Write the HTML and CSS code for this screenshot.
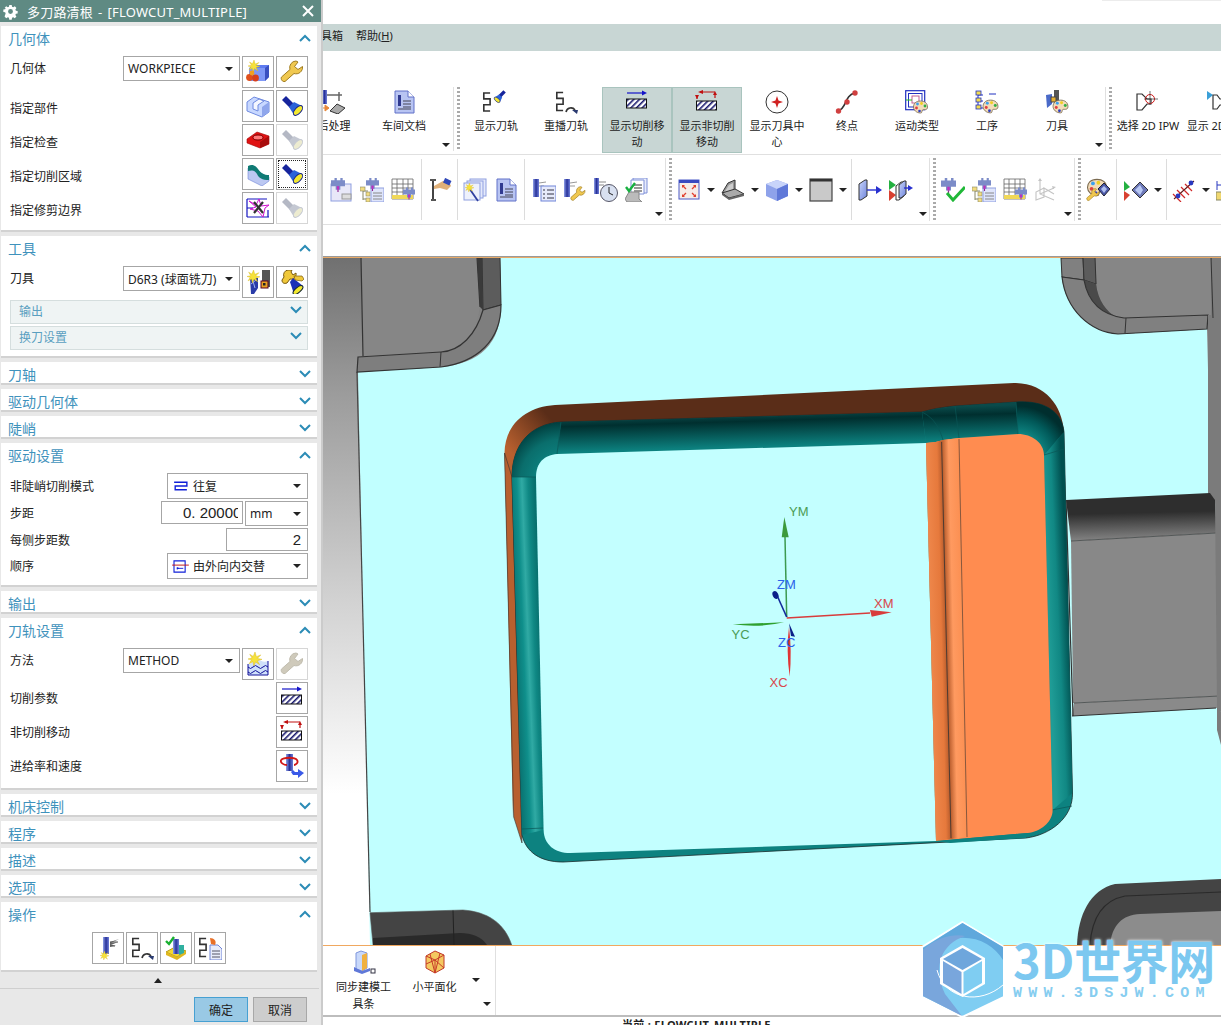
FILE: index.html
```html
<!DOCTYPE html>
<html lang="zh">
<head>
<meta charset="utf-8">
<title>多刀路清根</title>
<link rel="stylesheet" href="styles.css">
</head>
<body>
<svg class="sprite" xmlns="http://www.w3.org/2000/svg">
  <defs>
    <pattern id="hatch" width="4" height="4" patternUnits="userSpaceOnUse" patternTransform="rotate(45)"><rect width="4" height="4" fill="#fff"/><rect width="1.6" height="4" fill="#1a1a70"/></pattern>
    <linearGradient id="gBlue" x1="0" y1="0" x2="1" y2="1"><stop offset="0" stop-color="#c8d4fa"/><stop offset="1" stop-color="#6f85dc"/></linearGradient>
    <linearGradient id="gTool" x1="0" y1="0" x2="1" y2="0"><stop offset="0" stop-color="#8fa0e8"/><stop offset=".5" stop-color="#28329a"/><stop offset="1" stop-color="#6f7fd8"/></linearGradient>
    <linearGradient id="gBg" x1="0" y1="0" x2="0" y2="1"><stop offset="0" stop-color="#707070"/><stop offset=".2" stop-color="#9c9c9c"/><stop offset=".5" stop-color="#d2d2d2"/><stop offset=".78" stop-color="#fff"/></linearGradient>
    <linearGradient id="gBrown" gradientUnits="userSpaceOnUse" x1="505" y1="445" x2="545" y2="412"><stop offset="0" stop-color="#b8602f"/><stop offset="1" stop-color="#5a2d18"/></linearGradient>
    <linearGradient id="gTop" gradientUnits="userSpaceOnUse" x1="740" y1="413" x2="741" y2="447"><stop offset="0" stop-color="#0a4a4a"/><stop offset=".25" stop-color="#002f2f"/><stop offset="1" stop-color="#0c807e"/></linearGradient>
    <linearGradient id="gLeft" gradientUnits="userSpaceOnUse" x1="516" y1="650" x2="541" y2="649"><stop offset="0" stop-color="#0a7674"/><stop offset=".3" stop-color="#0f8f8b"/><stop offset=".5" stop-color="#30aaa4"/><stop offset=".75" stop-color="#0f8884"/><stop offset="1" stop-color="#08706e"/></linearGradient>
    <linearGradient id="gRight" gradientUnits="userSpaceOnUse" x1="1048" y1="625" x2="1069" y2="624"><stop offset="0" stop-color="#1f9c96"/><stop offset=".5" stop-color="#118884"/><stop offset="1" stop-color="#004f4f"/></linearGradient>
    <radialGradient id="gCornerL" gradientUnits="userSpaceOnUse" cx="561" cy="480" r="58"><stop offset=".4" stop-color="#0c807e"/><stop offset=".7" stop-color="#0a6e6c"/><stop offset="1" stop-color="#003e3e"/></radialGradient>
    <radialGradient id="gCornerR" gradientUnits="userSpaceOnUse" cx="1018" cy="458" r="52"><stop offset=".45" stop-color="#0e8683"/><stop offset=".75" stop-color="#015a5a"/><stop offset="1" stop-color="#002e2e"/></radialGradient>
    <linearGradient id="gConn" gradientUnits="userSpaceOnUse" x1="1140" y1="498" x2="1141" y2="540"><stop offset="0" stop-color="#2e2e2e"/><stop offset=".35" stop-color="#2e2e2e"/><stop offset="1" stop-color="#858585"/></linearGradient>
    <linearGradient id="gStrip" gradientUnits="userSpaceOnUse" x1="928" y1="640" x2="970" y2="639"><stop offset="0" stop-color="#f08a4e"/><stop offset=".32" stop-color="#e6793c"/><stop offset=".44" stop-color="#b85c2c"/><stop offset=".6" stop-color="#ff9a60"/><stop offset="1" stop-color="#f98848"/></linearGradient>
  </defs>

  <symbol id="pal" viewBox="0 0 16 14"><path d="M8 1C3 1 1 4 1 7s3 6 7 6c2 0 1-2 2-3s5 1 5-3-3-6-7-6z" fill="#f2dcb8" stroke="#7a6a50" stroke-width=".8"/><circle cx="5" cy="4" r="1.4" fill="#3aa0f0"/><circle cx="9" cy="3.5" r="1.4" fill="#f0d020"/><circle cx="12.5" cy="6" r="1.4" fill="#30b040"/><circle cx="4" cy="8" r="1.4" fill="#e04040"/><circle cx="7" cy="11" r="1.3" fill="#3040c0"/></symbol>
  <symbol id="zig" viewBox="0 0 10 22"><path d="M9 1H2v6.500h7V14H2v7h7" fill="none" stroke="#333" stroke-width="1.800"/></symbol>
  <symbol id="flash" viewBox="0 0 24 24"><path d="M2 6l4-4 8 8-4 4z" fill="#16249c"/><path d="M9 13l5-5 8 4-8 9z" fill="#2a62d8"/><ellipse cx="18" cy="16.500" rx="6" ry="3" transform="rotate(-48 18 16.500)" fill="#f2e830" stroke="#12208a"/></symbol>
  <symbol id="flashoff" viewBox="0 0 24 24"><path d="M2 6l4-4 8 8-4 4z" fill="#b4b8c4"/><path d="M9 13l5-5 8 4-8 9z" fill="#c4c8d2"/><ellipse cx="18" cy="16.500" rx="6" ry="3" transform="rotate(-48 18 16.500)" fill="#ecebd0" stroke="#c4c8d2"/></symbol>
  <symbol id="wrench" viewBox="0 0 24 24"><path d="M16 1a6.500 6.500 0 0 0-6 8.500L1.500 17c-1 2 .5 5 3.500 4.500L14 13.500a6.500 6.500 0 0 0 8.500-7L18 9.500l-3.500-3L18 2z" fill="#f0c850" stroke="#a07c20"/></symbol>
  <symbol id="wrenchoff" viewBox="0 0 24 24"><path d="M16 1a6.500 6.500 0 0 0-6 8.500L1.500 17c-1 2 .5 5 3.500 4.500L14 13.500a6.500 6.500 0 0 0 8.500-7L18 9.500l-3.500-3L18 2z" fill="#cfcabb" stroke="#c0bcae"/></symbol>
  <symbol id="star" viewBox="0 0 12 12"><path d="M6 0l1.200 4L11 2.500 8 5.500l4 .8-4 1.200 2 3.500-3.500-2.500L5 12l-.8-3.700L1 10l2-3.300L0 6l3.500-.8L1.500 2l3 1.800z" fill="#f6e23a" stroke="#d8b820" stroke-width=".4"/></symbol>

  <symbol id="geom" viewBox="0 0 24 24"><path d="M3 8l5-3h15v12l-4 4H3z" fill="#5f7cf0"/><path d="M3 8h16v13H3z" fill="#7f98f6"/><path d="M19 8l4-3v12l-4 4z" fill="#3a50c0"/><use href="#star" x="2" y="0" width="12" height="12"/><circle cx="3.500" cy="17.500" r="3.400" fill="#e0501c"/><circle cx="9.500" cy="18" r="3.400" fill="#d8401c"/><circle cx="6" cy="13" r="2.400" fill="#f0a020"/></symbol>
  <symbol id="part" viewBox="0 0 24 24"><path d="M1 8l7-5 15 5v10l-7 5L1 17z" fill="#c8d8ff" stroke="#6f8ae0"/><path d="M7 9l6-4 5 2-6 4v6l-5-2z" fill="#f4f7ff" stroke="#6f8ae0"/><path d="M16 23V13l7-5v10z" fill="#8fa6ec"/></symbol>
  <symbol id="redblock" viewBox="0 0 24 24"><path d="M1 11l10-7 12 4v8l-9 4-13-5z" fill="#e01212" stroke="#a00808" stroke-width=".6"/><ellipse cx="12" cy="9.500" rx="5" ry="2.500" fill="#ff7a7a" stroke="#700"/><path d="M14 20v-6l9-6v8z" fill="#a80c0c"/></symbol>
  <symbol id="surface" viewBox="0 0 24 24"><path d="M2 13V6l21 9v4l-7 5-14-7z" fill="#bcc8f2" stroke="#6f84d8" stroke-width=".6"/><path d="M2 4c4-2 7-1 10 3s6 6 11 6v5c-7 0-10-2-12-6S6 8 2 9z" fill="#0f7a74"/></symbol>
  <symbol id="trim" viewBox="0 0 24 24"><rect x="1" y="2" width="22" height="20" fill="#fff"/><path d="M1 3h20M1 12h6M1 21h22M1 3v18M22 14v7" fill="none" stroke="#1414c0" stroke-width="1.200"/><path d="M3 5l7 6-6 2 8 2 5 6 2-9 4-3-8 1-2-7-3 6z" fill="none" stroke="#d010d0"/><path d="M8 6l9 11M17 6L8 17" stroke="#333" stroke-width="2.200"/></symbol>
  <symbol id="toolnew" viewBox="0 0 24 24"><rect x="16" y="0" width="8" height="17" fill="#555"/><rect x="15" y="11" width="7" height="7" fill="#e8a020" stroke="#502"/><rect x="17" y="13" width="2.500" height="2.500" fill="#222"/><path d="M4 8h8v10l-4 6H5z" fill="#2a3ca8"/><path d="M6 8l3 10M5 14l5-4" stroke="#9fb0f0"/><use href="#star" x="1" y="0" width="13" height="13"/></symbol>
  <symbol id="toolwrench" viewBox="0 0 24 24"><path d="M8 0a5 5 0 0 0-4 7l-2 3c0 3 2 4 5 3l3-4a5 5 0 0 0 6-6l-3 2-2-3 1-2z" fill="#f0c83a" stroke="#7a5a10"/><path d="M10 12l3-4 10 8-9 8z" fill="#1c30b8"/><ellipse cx="18" cy="20" rx="6" ry="2.600" transform="rotate(-40 18 20)" fill="#f2e830" stroke="#123"/><path d="M14 6h8l2 3-2 2-7-1z" fill="#f0c83a" stroke="#7a5a10" stroke-width=".7"/></symbol>
  <symbol id="methodnew" viewBox="0 0 24 24"><path d="M2 12c5 0 5-4 9-4s6 3 11 1v14H2z" fill="#cfe0fa"/><path d="M2 15q2.500 3 5 0t5 0 5 0 5 0M2 20q2.500 3 5 0t5 0 5 0 5 0M2 23h20" fill="none" stroke="#10109a"/><path d="M2 12v11M22 9v14" stroke="#10109a"/><use href="#star" x="2" y="0" width="14" height="14"/></symbol>
  <symbol id="cutp" viewBox="0 0 24 24"><path d="M2 3h18" stroke="#1414c8" stroke-width="1.200"/><path d="M17 .5l5 2.500-5 2.500z" fill="#1414c8"/><rect x="1.500" y="9" width="20" height="9" fill="url(#hatch)" stroke="#111"/></symbol>
  <symbol id="noncut" viewBox="0 0 24 24"><path d="M5 2h15M20 3v5M2 6v3" stroke="#c01010" stroke-width="1.200" fill="none"/><path d="M8 0L3 2l5 2zM18 5h4l-2-4zM0 5h4l-2 4z" fill="#c01010"/><rect x="1.500" y="11" width="20" height="9" fill="url(#hatch)" stroke="#111"/></symbol>
  <symbol id="feed" viewBox="0 0 24 24"><rect x="6" y="0" width="7" height="17" fill="url(#gTool)"/><path d="M1 6c3-3 14-3 16 0s-2 5-3 5M1 6c-1 3 3 5 6 5" fill="none" stroke="#d01818" stroke-width="1.800"/><path d="M11 18l2 3h5v3l6-5-6-4v3h-3l-2-2z" fill="#3a5ae8"/></symbol>
  <symbol id="gen" viewBox="0 0 24 24"><rect x="7" y="1" width="6" height="17" fill="url(#gTool)"/><path d="M14 6l9-3-8 4 7-1-7 3 5 0-6 2z" fill="#666"/><path d="M14 6h8M14 10h5" stroke="#555"/><use href="#star" x="4" y="15" width="9" height="9"/></symbol>
  <symbol id="replay" viewBox="0 0 24 24"><use href="#zig" x="1" y="1" width="9" height="21"/><path d="M12 22a5 5 0 0 1 9-2" fill="none" stroke="#333" stroke-width="1.600"/><path d="M18 20h6l-1 4z" fill="#2a3a70"/></symbol>
  <symbol id="verify" viewBox="0 0 24 24"><path d="M2 16l9-5 11 4-9 6z" fill="#f4d832" stroke="#b89a18"/><path d="M2 16v3l11 5v-3zM13 21v3l9-6v-3z" fill="#e0b820"/><rect x="9" y="3" width="6" height="15" fill="url(#gTool)"/><path d="M15 9h5v8l-5 2z" fill="#30b0a0"/><path d="M2 5l3 3 5-7" fill="none" stroke="#18b030" stroke-width="2.400"/></symbol>
  <symbol id="listing" viewBox="0 0 24 24"><use href="#zig" x="0" y="1" width="9" height="21"/><path d="M12 9h8l4 4v11H12z" fill="#e8ecfb" stroke="#6f84d8"/><path d="M14 15h8M14 18h8M14 21h8" stroke="#556"/><path d="M12 2c4 0 7 3 5 7l-4-1z" fill="#e87028"/></symbol>
  <symbol id="post" viewBox="0 0 24 24"><rect x="0" y="0" width="5" height="14" fill="url(#gTool)"/><path d="M5 5h12M17 2v9M14 5h6" stroke="#666" stroke-width="1.500" fill="none"/><path d="M8 21l7-7 8 4-7 6z" fill="#aaa" stroke="#333"/><path d="M0 18h5M3 15l4 3-4 3z" fill="#e88838" stroke="#e88838"/></symbol>
  <symbol id="doc" viewBox="0 0 24 24"><path d="M3 1h13l6 6v16H3z" fill="#b8c4f2" stroke="#6070c8"/><path d="M16 1v6h6" fill="#fff" stroke="#6070c8"/><rect x="6" y="5" width="3" height="11" fill="#303a90"/><path d="M11 11h8M11 14h8M11 17h8M6 19h13" stroke="#445"/></symbol>
  <symbol id="pathflash" viewBox="0 0 30 24"><use href="#zig" x="1" y="1" width="9" height="22"/><g transform="translate(26 -1) rotate(90) scale(.6)"><use href="#flash" width="24" height="24"/></g></symbol>
  <symbol id="center" viewBox="0 0 24 24"><circle cx="12" cy="12" r="11" fill="#fff" stroke="#333"/><path d="M12 6l1.500 4.500L18 12l-4.500 1.500L12 18l-1.500-4.500L6 12l4.500-1.500z" fill="#d02020"/></symbol>
  <symbol id="endp" viewBox="0 0 24 24"><path d="M3 21C12 19 9 5 20 3" fill="none" stroke="#333" stroke-width="1.600"/><circle cx="20" cy="3" r="2.700" fill="#d04040"/><circle cx="12" cy="12" r="2.700" fill="#d04040"/><circle cx="3.500" cy="21" r="2.700" fill="#d04040"/></symbol>
  <symbol id="motion" viewBox="0 0 24 24"><rect x=".7" y=".7" width="19" height="19" fill="#fff" stroke="#2030c0" stroke-width="1.200"/><rect x="3.500" y="3.500" width="13.500" height="13.500" fill="none" stroke="#2030c0"/><rect x="7" y="6" width="7" height="7" fill="none" stroke="#c06090"/><path d="M1 10h6" stroke="#20c020"/><use href="#pal" x="7" y="10" width="17" height="14"/></symbol>
  <symbol id="oper" viewBox="0 0 24 24"><path d="M3 1v18M3 5h5M3 11h5M3 18h5M14 4h7" stroke="#2030c0" fill="none"/><rect x="1" y="1" width="5" height="4" fill="#f2dc50" stroke="#2030c0" stroke-width=".8"/><rect x="1" y="8" width="5" height="4" fill="#f2dc50" stroke="#2030c0" stroke-width=".8"/><rect x="1" y="15" width="5" height="4" fill="#f2dc50" stroke="#2030c0" stroke-width=".8"/><use href="#pal" x="7" y="9" width="17" height="15"/></symbol>
  <symbol id="toolpal" viewBox="0 0 24 24"><rect x="9" y="0" width="5" height="13" fill="#555"/><path d="M1 5l6-1v10l-5 4z" fill="#4a6ac8"/><rect x="6" y="7" width="5" height="5" fill="#e8b030" stroke="#444"/><use href="#pal" x="7" y="9" width="17" height="15"/></symbol>
  <symbol id="ipw" viewBox="0 0 24 24"><path d="M1 4h5l5 5h4v5h-4l-5 6H1z" fill="#fff" stroke="#333" stroke-width="1.200"/><circle cx="14" cy="9" r="4.500" fill="none" stroke="#d01818"/><path d="M14 1v14M8 9h14" stroke="#333" stroke-width=".7"/></symbol>
  <symbol id="ipwshow" viewBox="0 0 24 24"><path d="M1 1l6 4-6 5z" fill="#3aa0d8"/><path d="M7 5h4l3 4h4v6h-4l-3 4H7z" fill="#fff" stroke="#333" stroke-width="1.200"/></symbol>

  <symbol id="head" viewBox="0 0 12 12"><path d="M0 2h3V0h2v2h3V0h2v2h2v5H8v3H4V7H0z" fill="#7c8cc8"/><path d="M5 7h2v3H5z" fill="#c030c0"/><path d="M6 10v2" stroke="#902090"/></symbol>
  <symbol id="box" viewBox="0 0 24 24"><rect x="2" y="6" width="20" height="17" fill="#e8e8f8" stroke="#8f9fe0"/><rect x="13" y="16" width="9" height="5" fill="#ddd" stroke="#999"/><use href="#head" x="2" y="0" width="14" height="14"/></symbol>
  <symbol id="treetool" viewBox="0 0 24 24"><path d="M3 9v13M3 13h5M3 21h5" stroke="#886" fill="none"/><rect x="0" y="9" width="5" height="4" fill="#f2dc80" stroke="#886" stroke-width=".6"/><rect x="6" y="14" width="4" height="4" fill="#f2dc80" stroke="#886" stroke-width=".6"/><rect x="6" y="20" width="4" height="4" fill="#f2dc80" stroke="#886" stroke-width=".6"/><rect x="11" y="10" width="13" height="14" fill="#dfe5fb" stroke="#8f9fe0"/><path d="M13 15h9M13 18h9M13 21h9" stroke="#888"/><use href="#head" x="6" y="0" width="13" height="13"/></symbol>
  <symbol id="table" viewBox="0 0 24 24"><path d="M1 1h21v20H1zM1 6h21M1 10h21M1 14h21M6 1v20M12 1v20M17 1v20" fill="#fff" stroke="#666" stroke-width=".8"/><rect x="1" y="17" width="21" height="4" fill="#f0d858"/><use href="#head" x="12" y="9" width="12" height="13"/></symbol>
  <symbol id="flag" viewBox="0 0 24 24"><path d="M5 1v20" stroke="#444" stroke-width="2"/><path d="M3 21h5v2H3zM2 1h6v2H2z" fill="#555"/><path d="M6 8l9-5 6 1 2 4-4 4-7-2-6 1z" fill="#e0b078"/><rect x="16" y="1" width="7" height="5" fill="#3048b8" transform="rotate(25 19 3)"/></symbol>
  <symbol id="wand" viewBox="0 0 24 24"><rect x="7" y="1" width="16" height="17" fill="#e4e9fb" stroke="#8f9fe0"/><rect x="4" y="3" width="16" height="17" fill="#e4e9fb" stroke="#8f9fe0"/><rect x="1" y="5" width="16" height="17" fill="#eef1fc" stroke="#8f9fe0"/><path d="M6 10l9 13" stroke="#3040a0" stroke-width="1.800"/><use href="#star" x="2" y="5" width="9" height="9"/></symbol>
  <symbol id="toollist" viewBox="0 0 24 24"><rect x="1" y="1" width="6" height="18" fill="url(#gTool)"/><path d="M7 5l7-1M7 8h5" stroke="#999"/><rect x="9" y="8" width="15" height="15" fill="#e6eafb" stroke="#6f84d8"/><path d="M11 12h2M15 12h7M11 16h2M15 16h7M11 20h2M15 20h7" stroke="#334"/></symbol>
  <symbol id="toolwr2" viewBox="0 0 24 24"><rect x="1" y="1" width="6" height="18" fill="url(#gTool)"/><path d="M7 5l7-1M7 8h5" stroke="#999"/><use href="#wrench" x="6" y="8" width="18" height="16"/></symbol>
  <symbol id="toolclock" viewBox="0 0 24 24"><rect x="0" y="0" width="5" height="16" fill="url(#gTool)"/><path d="M5 4h7M5 7h5" stroke="#888"/><circle cx="15" cy="15" r="8.500" fill="#d8e0f0" stroke="#556"/><path d="M15 9v6l4 2" fill="none" stroke="#222"/></symbol>
  <symbol id="checkdoc" viewBox="0 0 24 24"><path d="M8 5V0h14v15h-4" fill="#e8ecfb" stroke="#7f90d8"/><path d="M6 2h13v14H6z" fill="#fff" stroke="#7f90d8"/><path d="M9 7h8M9 10h8M9 13h8" stroke="#333"/><path d="M0 21l4-7h10v7l3 3H2z" fill="#bbb" stroke="#888"/><path d="M1 9l3 4 6-8" fill="none" stroke="#18b040" stroke-width="2.400"/></symbol>
  <symbol id="fit" viewBox="0 0 24 24"><rect x="2" y="2" width="20" height="19" fill="#f6ece8" stroke="#4a5ac8"/><rect x="2" y="2" width="20" height="3" fill="#3a4ac0"/><path d="M6 8l3 3M18 8l-3 3M6 18l3-3M18 18l-3-3" stroke="#e04030" stroke-width="1.300"/><path d="M5 7h3L5 10zM19 7h-3l3 3zM5 19h3l-3-3zM19 19h-3l3-3z" fill="#e04030"/></symbol>
  <symbol id="laptop" viewBox="0 0 24 24"><path d="M1 15L7 5l7-3v10l-6 8z" fill="#999" stroke="#333"/><path d="M3 15l5-8 4-2v7l-4 5z" fill="#ccc"/><path d="M1 15l7 5 15-4-7-4-2-1z" fill="#aaa" stroke="#333"/><path d="M1 15v2l7 5 15-4v-2l-15 4z" fill="#666"/></symbol>
  <symbol id="cube" viewBox="0 0 24 24"><path d="M1 6l11-4 11 4v12l-11 5-11-5z" fill="#8ea2ea"/><path d="M1 6l11 5 11-5-11-4z" fill="#c8d4fa"/><path d="M12 11v12l11-5V6z" fill="#5f78d8"/></symbol>
  <symbol id="square" viewBox="0 0 24 24"><rect x="1" y="1" width="22" height="22" fill="#c9c9c9" stroke="#444" stroke-width="1.200"/><rect x="1" y="1" width="22" height="2.500" fill="#333"/></symbol>
  <symbol id="plate" viewBox="0 0 24 24"><path d="M1 6l6-4h2v16l-6 4H1z" fill="url(#gBlue)" stroke="#333"/><path d="M9 12h10" stroke="#2830d0" stroke-width="1.400"/><path d="M18 8l6 4-6 4z" fill="#2830d0"/></symbol>
  <symbol id="plate2" viewBox="0 0 24 24"><path d="M0 2l7 5-7 5z" fill="#24b040"/><path d="M0 12l7 5-7 6z" fill="#d84030"/><path d="M7 8l5-4h3v14l-5 4H7z" fill="#fff" stroke="#333"/><path d="M10 7l5-4h2v13l-5 4h-2z" fill="url(#gBlue)" stroke="#333"/><path d="M15 10h5" stroke="#2830d0" stroke-width="1.400"/><path d="M19 7l5 3-5 3z" fill="#2830d0"/></symbol>
  <symbol id="toolcheck" viewBox="0 0 24 24"><use href="#head" x="0" y="0" width="15" height="15"/><path d="M6 15l6 7L24 9" fill="none" stroke="#20b838" stroke-width="3"/></symbol>
  <symbol id="axes" viewBox="0 0 24 24"><path d="M6 2v14l14 6M6 16l14-6M10 10l-8 4v8l8-3V10l10 6" fill="none" stroke="#c4c4c4" stroke-width="1.100"/><path d="M4 3l2-3 2 3zM18 8l4 1-3 2z" fill="#c4c4c4"/></symbol>
  <symbol id="palwr" viewBox="0 0 24 24"><use href="#pal" x="0" y="0" width="22" height="19"/><use href="#wrench" x="0" y="10" width="14" height="14"/><path d="M12 11l6-6 6 6-6 7z" fill="#4a58a8" stroke="#223"/><path d="M15 11l3-3 3 3-3 4z" fill="#b0c0f0"/></symbol>
  <symbol id="tridia" viewBox="0 0 24 24"><path d="M0 3l6 6-6 4z" fill="#24b040"/><path d="M0 13l6 4-6 6z" fill="#d84030"/><path d="M8 12l8-8 8 8-8 8z" fill="#6c78b8" stroke="#333"/><path d="M11 12l5-5 3 5-3 5z" fill="#b8c8f4"/></symbol>
  <symbol id="redaxis" viewBox="0 0 24 24"><path d="M2 21L22 3M1 16l8 8M5 12l8 8M9 9l8 8M13 6l7 7" stroke="#d02828" stroke-width="1.200"/><path d="M2 21L22 3" stroke="#333"/><circle cx="6" cy="18" r="2.400" fill="#2838c0"/><circle cx="19" cy="5" r="2.400" fill="#2838c0"/></symbol>
  <symbol id="ruler" viewBox="0 0 24 24"><path d="M1 3v9M1 7h9" stroke="#2838c0"/><path d="M8 4l5 3-5 3z" fill="#2838c0"/><rect x="0" y="14" width="24" height="8" fill="#f0d870" stroke="#886"/></symbol>
  <symbol id="sync" viewBox="0 0 24 24"><path d="M4 3l5-2 6 2v15l-5 3-6-2z" fill="#c8d8fa" stroke="#7f96dc"/><path d="M10 5l5-2v15l-5 3z" fill="#f0b040"/><path d="M2 17l8 4 8-3v3l-8 3-8-3z" fill="#5f78d8"/><rect x="19" y="19" width="4" height="4" fill="#fff" stroke="#334"/></symbol>
  <symbol id="facet" viewBox="0 0 24 24"><path d="M3 6l9-5 9 4v13l-9 5-9-5z" fill="#f4c860" stroke="#c03828"/><path d="M3 6l9 4 9-5M12 10v13M3 14l9-4 9 8M7 4l5 19M17 3l-5 20" fill="none" stroke="#c83a28"/></symbol>
  <symbol id="wave" viewBox="0 0 16 12"><path d="M2 2h12v3.500H3V9h11" fill="none" stroke="#1020d8" stroke-width="1.300"/></symbol>
  <symbol id="alt" viewBox="0 0 18 14"><path d="M2 1h12v12H2z" fill="none" stroke="#1020d8" stroke-width="1.200"/><path d="M0 5.500h18" stroke="#c01010"/><path d="M5 9h7" stroke="#1020d8"/><path d="M5 7.500v3L8 9z" fill="#1020d8"/></symbol>
  <symbol id="up" viewBox="0 0 12 8"><path d="M1 7l5-5 5 5" fill="none" stroke="#2c8cb6" stroke-width="2"/></symbol>
  <symbol id="dn" viewBox="0 0 12 8"><path d="M1 1l5 5 5-5" fill="none" stroke="#2c8cb6" stroke-width="2"/></symbol>
</svg>

<aside class="panel">
  <div class="title">
    <svg class="gear" viewBox="0 0 16 16"><path fill="#fff" fill-rule="evenodd" d="M6.500 0h3l.4 2.200 1.500.7L13.300 1.600l2 2.200-1.300 1.800.6 1.500 2.200.4v3l-2.200.4-.6 1.500 1.300 1.800-2 2.200-1.900-1.300-1.500.7-.4 2.200h-3l-.4-2.200-1.500-.7-1.900 1.300-2-2.200L2 10.400l-.6-1.500L-.8 8.500v-3l2.200-.4.6-1.500L.7 3.800l2-2.200 1.900 1.300 1.500-.7zM8 5a3 3 0 1 0 0 6 3 3 0 0 0 0-6z"/></svg>
    <span class="title-text">多刀路清根 - [FLOWCUT_MULTIPLE]</span>
    <svg class="close" viewBox="0 0 12 12"><path d="M1 1l10 10M11 1L1 11" stroke="#fff" stroke-width="2"/></svg>
  </div>

  <section class="sec">
    <div class="head"><span>几何体</span><svg class="chev"><use href="#up"/></svg></div>
    <div class="body">
      <div class="row"><span class="lab top">几何体</span><div class="dd w117"><span>WORKPIECE</span><i class="tri"></i></div><button class="b"><svg><use href="#geom"/></svg></button><button class="b"><svg><use href="#wrench"/></svg></button></div>
      <div class="row"><span class="lab low">指定部件</span><button class="b"><svg><use href="#part"/></svg></button><button class="b"><svg><use href="#flash"/></svg></button></div>
      <div class="row"><span class="lab low">指定检查</span><button class="b"><svg><use href="#redblock"/></svg></button><button class="b off"><svg><use href="#flashoff"/></svg></button></div>
      <div class="row"><span class="lab low">指定切削区域</span><button class="b"><svg><use href="#surface"/></svg></button><button class="b focus"><svg><use href="#flash"/></svg></button></div>
      <div class="row"><span class="lab low">指定修剪边界</span><button class="b"><svg><use href="#trim"/></svg></button><button class="b off"><svg><use href="#flashoff"/></svg></button></div>
    </div>
  </section>

  <section class="sec">
    <div class="head"><span>工具</span><svg class="chev"><use href="#up"/></svg></div>
    <div class="body">
      <div class="row"><span class="lab top">刀具</span><div class="dd w117"><span>D6R3 (球面铣刀)</span><i class="tri"></i></div><button class="b"><svg><use href="#toolnew"/></svg></button><button class="b"><svg><use href="#toolwrench"/></svg></button></div>
      <div class="sub"><span>输出</span><svg class="chev"><use href="#dn"/></svg></div>
      <div class="sub"><span>换刀设置</span><svg class="chev"><use href="#dn"/></svg></div>
    </div>
  </section>

  <section class="sec"><div class="head"><span>刀轴</span><svg class="chev"><use href="#dn"/></svg></div></section>
  <section class="sec"><div class="head"><span>驱动几何体</span><svg class="chev"><use href="#dn"/></svg></div></section>
  <section class="sec"><div class="head"><span>陡峭</span><svg class="chev"><use href="#dn"/></svg></div></section>

  <section class="sec">
    <div class="head"><span>驱动设置</span><svg class="chev"><use href="#up"/></svg></div>
    <div class="body">
      <div class="row h26"><span class="lab">非陡峭切削模式</span><div class="dd w141"><svg class="ddi"><use href="#wave"/></svg><span>往复</span><i class="tri"></i></div></div>
      <div class="row h25"><span class="lab up2">步距</span><div class="inp w82 clipnum"><span>0. 20000</span></div><div class="dd w63"><span>mm</span><i class="tri"></i></div></div>
      <div class="row h23"><span class="lab">每侧步距数</span><div class="inp w82 right"><span>2</span></div></div>
      <div class="row h26"><span class="lab">顺序</span><div class="dd w141"><svg class="ddi"><use href="#alt"/></svg><span>由外向内交替</span><i class="tri"></i></div></div>
    </div>
  </section>

  <section class="sec"><div class="head"><span>输出</span><svg class="chev"><use href="#dn"/></svg></div></section>

  <section class="sec">
    <div class="head"><span>刀轨设置</span><svg class="chev"><use href="#up"/></svg></div>
    <div class="body">
      <div class="row"><span class="lab top">方法</span><div class="dd w117"><span>METHOD</span><i class="tri"></i></div><button class="b"><svg><use href="#methodnew"/></svg></button><button class="b off"><svg><use href="#wrenchoff"/></svg></button></div>
      <div class="row"><span class="lab">切削参数</span><button class="b"><svg><use href="#cutp"/></svg></button></div>
      <div class="row"><span class="lab">非切削移动</span><button class="b"><svg><use href="#noncut"/></svg></button></div>
      <div class="row"><span class="lab">进给率和速度</span><button class="b"><svg><use href="#feed"/></svg></button></div>
    </div>
  </section>

  <section class="sec"><div class="head"><span>机床控制</span><svg class="chev"><use href="#dn"/></svg></div></section>
  <section class="sec"><div class="head"><span>程序</span><svg class="chev"><use href="#dn"/></svg></div></section>
  <section class="sec"><div class="head"><span>描述</span><svg class="chev"><use href="#dn"/></svg></div></section>
  <section class="sec"><div class="head"><span>选项</span><svg class="chev"><use href="#dn"/></svg></div></section>

  <section class="sec last">
    <div class="head"><span>操作</span><svg class="chev"><use href="#up"/></svg></div>
    <div class="body">
      <div class="row center"><button class="b"><svg><use href="#gen"/></svg></button><button class="b"><svg><use href="#replay"/></svg></button><button class="b"><svg><use href="#verify"/></svg></button><button class="b"><svg><use href="#listing"/></svg></button></div>
    </div>
  </section>
  <div class="expand"><i class="tri-up"></i></div>
  <div class="actions"><button class="act ok">确定</button><button class="act">取消</button></div>
</aside>

<main class="main">
  <div class="topbar"><div class="topshadow"></div></div>
  <nav class="menu"><span class="m1">工具箱</span><span class="m2">帮助(<u>H</u>)</span></nav>
  <div class="gap34"></div>

  <div class="ribbon">
    <div class="ri"><svg><use href="#post"/></svg><span>后处理</span></div>
    <div class="ri"><svg><use href="#doc"/></svg><span>车间文档</span></div>
    <div class="cbox low1"><i class="tri"></i></div>
    <div class="grip"></div>
    <div class="ri"><svg class="wide"><use href="#pathflash"/></svg><span>显示刀轨</span></div>
    <div class="ri"><svg><use href="#replay"/></svg><span>重播刀轨</span></div>
    <div class="ri on first"><svg><use href="#cutp"/></svg><span>显示切削移动</span></div>
    <div class="ri on"><svg><use href="#noncut"/></svg><span>显示非切削移动</span></div>
    <div class="ri"><svg><use href="#center"/></svg><span>显示刀具中心</span></div>
    <div class="ri"><svg><use href="#endp"/></svg><span>终点</span></div>
    <div class="ri"><svg><use href="#motion"/></svg><span>运动类型</span></div>
    <div class="ri"><svg><use href="#oper"/></svg><span>工序</span></div>
    <div class="ri"><svg><use href="#toolpal"/></svg><span>刀具</span></div>
    <div class="cbox low1 c13"><i class="tri"></i></div>
    <div class="grip"></div>
    <div class="ri"><svg><use href="#ipw"/></svg><span>选择 2D IPW</span></div>
    <div class="ri"><svg><use href="#ipwshow"/></svg><span>显示 2D IPW</span></div>
  </div>

  <div class="tools">
    <div class="ti"><svg><use href="#box"/></svg></div>
    <div class="ti"><svg><use href="#treetool"/></svg></div>
    <div class="ti"><svg><use href="#table"/></svg></div>
    <div class="sp s6"></div>
    <div class="ti"><svg><use href="#flag"/></svg></div>
    <div class="sp s4"></div>
    <div class="ti"><svg><use href="#wand"/></svg></div>
    <div class="ti"><svg><use href="#doc"/></svg></div>
    <div class="sp s7"></div>
    <div class="ti"><svg><use href="#toollist"/></svg></div>
    <div class="ti"><svg><use href="#toolwr2"/></svg></div>
    <div class="ti"><svg><use href="#toolclock"/></svg></div>
    <div class="ti"><svg><use href="#checkdoc"/></svg></div>
    <div class="cbox low2"><i class="tri"></i></div>
    <div class="grip g2"></div>
    <div class="ti"><svg><use href="#fit"/></svg></div>
    <div class="cbox"><i class="tri"></i></div>
    <div class="ti"><svg><use href="#laptop"/></svg></div>
    <div class="cbox"><i class="tri"></i></div>
    <div class="ti"><svg><use href="#cube"/></svg></div>
    <div class="cbox"><i class="tri"></i></div>
    <div class="ti"><svg><use href="#square"/></svg></div>
    <div class="cbox"><i class="tri"></i></div>
    <div class="sp s5"></div>
    <div class="ti"><svg><use href="#plate"/></svg></div>
    <div class="ti"><svg><use href="#plate2"/></svg></div>
    <div class="cbox low2"><i class="tri"></i></div>
    <div class="grip g2"></div>
    <div class="ti"><svg><use href="#toolcheck"/></svg></div>
    <div class="ti"><svg><use href="#treetool"/></svg></div>
    <div class="ti"><svg><use href="#table"/></svg></div>
    <div class="ti"><svg><use href="#axes"/></svg></div>
    <div class="cbox low2"><i class="tri"></i></div>
    <div class="grip g2"></div>
    <div class="ti"><svg><use href="#palwr"/></svg></div>
    <div class="sp s7"></div>
    <div class="ti"><svg><use href="#tridia"/></svg></div>
    <div class="cbox"><i class="tri"></i></div>
    <div class="sp s4"></div>
    <div class="ti"><svg><use href="#redaxis"/></svg></div>
    <div class="cbox"><i class="tri"></i></div>
    <div class="ti"><svg><use href="#ruler"/></svg></div>
  </div>

  <div class="gap31"></div>

  <svg class="view" viewBox="323 258 898 687" xmlns="http://www.w3.org/2000/svg">
    <rect x="323" y="257" width="898" height="688" fill="url(#gBg)"/>
    <path d="M358 372L440 367Q501 362 501 305L500 257H1061L1062 278C1066 310 1090 332 1118 334L1207 329L1208 370V500H1221V945H370Z" fill="#c1ffff"/>
    <path d="M357 372L370 912" stroke="#444" stroke-width="1.200" fill="none"/>
    <!-- top left block -->
    <path d="M361 257H477L480 307C476 335 460 351 441 352L363 356Z" fill="#868686"/>
    <path d="M361 257L363 356M477 257L480 307" stroke="#333" stroke-width="1.200" fill="none"/>
    <path d="M482 257H500L501 305L483 310Z" fill="#5c5c5c" stroke="#333"/>
    <path d="M477 257H482L483 310L480 307Z" fill="#3a3a3a"/>
    <path d="M358 357L441 352C460 351 476 335 483 310L501 305C501 340 478 362 441 367L357 372Z" fill="#7e7e7e" stroke="#333" stroke-width="1.200"/>
    <path d="M441 352L440 367" stroke="#333"/>
    <!-- top right block -->
    <path d="M1095 257L1097 290C1100 305 1108 314 1118 318L1211 315V257Z" fill="#868686"/>
    <path d="M1061 258H1083L1084 280L1062 277Z" fill="#808080" stroke="#333"/>
    <path d="M1083 257H1095L1096 284L1084 280Z" fill="#5c5c5c" stroke="#333"/>
    <path d="M1084 280L1096 284C1098 300 1106 312 1118 318L1124 318C1102 315 1088 302 1084 280Z" fill="#4a4a4a"/>
    <path d="M1062 277L1084 280C1088 302 1102 315 1124 318L1208 315L1207 329L1118 334C1090 332 1066 310 1062 277Z" fill="#808080" stroke="#333" stroke-width="1.200"/>
    <path d="M1126 318L1125 333" stroke="#333"/>
    <path d="M1211 257V315L1208 315V500H1221V257Z" fill="#7b7b7b"/>
    <path d="M1211 257L1213 318" stroke="#333"/>
    <!-- connector -->
    <path d="M1066 500L1210 493L1215 500L1217 533L1071 541Z" fill="url(#gConn)"/>
    <path d="M1071 541L1217 533L1220 696L1073 703Z" fill="#888"/>
    <path d="M1074 703L1220 696L1217 708L1072 716Z" fill="#8a8a8a"/>
    <path d="M1071 541L1217 533M1074 703L1220 696" stroke="#444" stroke-width=".8"/>
    <path d="M1072 716L1216 708M1066 500L1073 716" stroke="#333" stroke-width="1.200"/>
    <path d="M1217 700L1221 712V745L1217 730Z" fill="#7b7b7b"/>
    <path d="M1215 500H1221V712L1217 708Z" fill="#7b7b7b"/>
    <!-- pocket -->
    <path d="M504.500 453C505 425 525 407 555 405L1014 383C1045 383 1062 405 1064 432L1040 500H530L513 817Z" fill="url(#gBrown)"/>
    <path d="M504.500 453L512 477L522 843L513.700 817Z" fill="#b8602f" stroke="#333" stroke-width=".6"/>
    <path d="M512 477C512 445 530 424 561 422L922 412Q935 408 955 406L1016 402C1045 400 1062 412 1064 432L1072.500 793C1073 818 1050 835 1026 838L563 862C540 862 526 852 522 835Z" fill="#0d8280" stroke="#1a2a2a" stroke-width=".8"/>
    <path d="M561 422L922 412L926 443L557 454Z" fill="url(#gTop)"/>
    <path d="M922 412Q935 408 955 406L1016 402L1018 434L959 438L926 443Z" fill="url(#gTop)"/>
    <path d="M512 477L536 477L543.600 830L522 835Z" fill="url(#gLeft)"/>
    <path d="M1044 455L1064 432L1072.500 793L1052.600 810Z" fill="url(#gRight)"/>
    <path d="M1016 402C1045 400 1062 412 1064 432L1044 455C1044 443 1032 434 1018 434Z" fill="url(#gCornerR)"/>
    <path d="M561 422C530 424 512 445 512 477H536C536 462 545 455 557 454Z" fill="url(#gCornerL)"/>
    <path d="M561 422L557 454M922 412C935 418 940 430 943 440M955 406L959 438M1016 402L1018 434M1044 455L1064 449M512 477L536 477M522 829L543 828M1052 810L1072 806" stroke="#0a5656" stroke-width=".7" fill="none"/>
    <path d="M536 477C536 462 545 455 557 454L926 443L936 841L570 853C555 853 544 845 543.600 830Z" fill="#c3ffff"/>
    <path d="M926 443Q935 443 943 440L959 438L1018 434C1032 434 1044 443 1044 455L1052.600 810C1053 822 1040 832 1027.700 833L936 841Z" fill="#ff8c50"/>
    <path d="M926 443Q935 443 943 440L959 438L967 837L936 841Z" fill="url(#gStrip)"/>
    <path d="M941.600 442L951 838" stroke="#333" stroke-width=".8"/>
    <path d="M959 439L967 837" stroke="#6a4a38" stroke-width=".8"/>
    <path d="M936 841L1027.700 833L1026 838L950 843Z" fill="#0d8280"/>
    <!-- bottom blocks -->
    <path d="M370 912.700L463 910C490 912 505 925 511.700 945H373Z" fill="#444" stroke="#555" stroke-width=".6"/>
    <path d="M373 938L460 933C472 933 482 937 487 945H373Z" fill="#2a2a2a"/>
    <path d="M453 910.500L454 945" stroke="#222"/>
    <path d="M1077 945C1078 915 1090 890 1115 884L1221 879V945Z" fill="#444"/>
    <path d="M1110 945C1112 925 1122 915 1140 914L1221 911V945Z" fill="#8c8c8c"/>
    <path d="M1090 945C1092 915 1105 900 1125 896L1221 892" stroke="#2a2a2a" fill="none" stroke-width="1.200"/>
    <!-- triad -->
    <path d="M786.700 617L785 537" stroke="#3c9a50" stroke-width="1.500"/>
    <path d="M784.300 517L781.700 537.300H788.700Z" fill="#3c9a3c"/>
    <path d="M786.700 618L870 613" stroke="#d83c3c" stroke-width="1.500"/>
    <path d="M891.700 612.300L870 610L871.700 616.700Z" fill="#d83c3c"/>
    <path d="M786.700 617L777.300 596" stroke="#122a9c" stroke-width="1.600"/>
    <ellipse cx="775.500" cy="595" rx="2.800" ry="4" transform="rotate(-25 775.500 595)" fill="#0a1f88"/>
    <path d="M784 622.300L732.700 624.300Q760 628 784 622.300Z" fill="#30a030"/>
    <path d="M789 626.700L789.700 676.700Q786 650 789 626.700Q792 650 789.700 676.700Z" fill="#e03434"/>
    <path d="M789 623.300L795 636.700L791 636Z" fill="#0a1f88"/>
    <text class="ax green" x="789" y="516">YM</text>
    <text class="ax red" x="874" y="608">XM</text>
    <text class="ax blue" x="777" y="589">ZM</text>
    <text class="ax green" x="731.500" y="639">YC</text>
    <text class="ax blue" x="778" y="647">ZC</text>
    <text class="ax red" x="769.500" y="687">XC</text>
  </svg>

  <div class="bottom">
    <div class="ri b1"><svg><use href="#sync"/></svg><span>同步建模工具条</span></div>
    <div class="ri b1"><svg><use href="#facet"/></svg><span>小平面化</span></div>
    <div class="bcar"><i class="tri"></i><i class="tri"></i></div>
  </div>
  <div class="status">当前 : FLOWCUT_MULTIPLE</div>
</main>

<div class="mark">
  <svg class="mark-logo" viewBox="920 920 86 100" xmlns="http://www.w3.org/2000/svg">
    <path d="M962.500 922L1004 947V997L962.500 1017L922 997V947Z" fill="#7fcdf2" stroke="#fff" stroke-width="2"/>
    <path d="M962.500 923L1003 947L1003 960C990 938 960 928 923 950V948Z" fill="#5fa8dc"/>
    <path d="M923 950C938 936 955 934 965 936C942 944 932 965 945 994L962 1016L923 996Z" fill="#79a6dc"/>
    <path d="M937 970C945 1000 980 1005 1003 985" fill="none" stroke="#fff" stroke-width="1"/>
    <path d="M962.500 945L985 958V984L962.500 997L940 984V958Z" fill="#fff"/>
    <path d="M962.500 948L982 959L962.500 970L943 959Z" fill="#6ea6dc"/>
    <path d="M943 961L961.500 972V994L943 983Z" fill="#79a6dc"/>
    <path d="M963.500 972L982 961V983L963.500 994Z" fill="#7fcdf2"/>
  </svg>
  <div class="mark-text"><div class="mark-big">3D世界网</div><div class="mark-small">WWW.3DSJW.COM</div></div>
</div>
</body>
</html>
```

FILE: styles.css
```css
* { box-sizing: border-box; }
html, body { margin: 0; height: 100%; }
body {
  width: 1221px; height: 1025px; overflow: hidden; position: relative;
  display: flex; background: #fff; color: #222;
  font: 12px "Noto Sans", "Noto Sans CJK SC", sans-serif;
}
.sprite { display: block; width: 0; height: 0; flex: none; }
button { font: inherit; color: inherit; margin: 0; padding: 0; }

/* dialog */
.panel { flex: none; width: 323px; height: 1025px; background: #e8e8e8; border-right: 2px solid #cbcbcb; overflow: hidden; }
.title { height: 22px; background: #5f8a83; color: #fff; display: flex; align-items: center; padding: 0 7px 0 4px; margin-right: -2px; margin-bottom: 4px; }
.gear { width: 13px; height: 13px; overflow: visible; margin-right: 10px; }
.title-text { font-size: 13px; flex: 1; white-space: nowrap; word-spacing: 1.500px; letter-spacing: .2px; }
.close { width: 12px; height: 12px; margin-right: 2px; }

.sec { width: 316px; margin: 0 0 4px 1px; background: #fff; border-bottom: 2px solid #d2d2d2; }
.sec.last { margin-bottom: 0; }
.head { height: 21px; line-height: 26px; font-size: 14px; color: #3f92bc; display: flex; justify-content: space-between; padding: 0 6px 0 7px; overflow: visible; }
.chev { width: 12px; height: 8px; margin-top: 7.500px; flex: none; }
.body { padding: 9px 9px 4px 9px; }
.row { display: flex; height: 32px; margin-bottom: 2px; gap: 2px; }
.row.h26 { height: 26px; } .row.h25 { height: 25px; } .row.h23 { height: 23px; }
.row.center { justify-content: center; }
.lab { flex: 1; align-self: center; white-space: nowrap; }
.lab.top { align-self: flex-start; line-height: 25px; }
.lab.low { padding-top: 4px; }
.lab.up2 { padding-bottom: 2px; }

.b { width: 32px; height: 32px; border: 1px solid #a6a6a6; background: #fff; display: flex; align-items: center; justify-content: center; }
.b svg { width: 24px; height: 24px; display: block; }
.b.off { border-color: #d6d6d6; }
.b.focus { outline: 1px dotted #222; outline-offset: -3px; }

.dd { height: 100%; border: 1px solid #a6a6a6; background: #fff; display: flex; align-items: center; padding: 0 6px 0 4px; gap: 4px; white-space: nowrap; }
.dd > span { flex: 1; }
.w117 { width: 117px; height: 25px; }
.w141 { width: 141px; padding-left: 4px; }
.w63 { width: 63px; }
.ddi { width: 17px; height: 13px; flex: none; }
.tri { display: inline-block; width: 0; height: 0; border: 4px solid transparent; border-top: 4.500px solid #222; border-bottom: 0; flex: none; }
.inp { width: 82px; height: 23px; border: 1px solid #a6a6a6; background: #fff; font: 15px "Liberation Sans", sans-serif; line-height: 21px; white-space: nowrap; overflow: hidden; }
.clipnum { padding-left: 21px; padding-right: 4px; }
.clipnum span { display: block; overflow: hidden; }
.right { text-align: right; padding-right: 6px; }

.sub { height: 24px; margin-bottom: 2px; background: #eff4f4; border: 1px solid #d5dede; color: #5a9fc0; display: flex; justify-content: space-between; padding: 0 5px 0 8px; line-height: 22px; }
.sub .chev { margin-top: 5px; }

.expand { height: 17px; border-bottom: 1px solid #cfcfcf; display: flex; justify-content: center; align-items: center; margin-right: 2px; }
.tri-up { width: 0; height: 0; border: 4.500px solid transparent; border-bottom: 5px solid #222; border-top: 0; margin-left: -4px; }
.actions { display: flex; gap: 5px; padding: 8px 0 0 194px; }
.act { width: 54px; height: 25px; background: #cdcdcd; border: 1px solid #a8a8a8; }
.act.ok { background: #99c9e5; border-color: #46a0d2; }

/* main */
.main { flex: 1; min-width: 0; height: 1025px; display: flex; flex-direction: column; overflow: hidden; }
.topbar { height: 24px; flex: none; display: flex; justify-content: flex-end; }
.topshadow { width: 119px; height: 1px; background: #ececec; }
.menu { height: 27px; flex: none; background: #c8d6d4; font-size: 11px; line-height: 24px; display: flex; white-space: nowrap; }
.m1 { margin-left: -13px; width: 46px; }
.gap34 { height: 34px; flex: none; }
.gap31 { height: 33px; flex: none; border-bottom: 1px solid #eaaa66; box-shadow: inset 0 -1px 0 #9a9a9a; }

.ribbon { height: 70px; flex: none; display: flex; margin-left: -24px; border-bottom: 1px solid #e0e0e0; width: 1000px; min-width: 1000px; }
.ri { flex: none; width: 70px; height: 66px; margin-top: 2px; padding: 3px 3px 0; display: flex; flex-direction: column; align-items: center; text-align: center; font-size: 11px; line-height: 16px; }
.ri svg { width: 24px; height: 24px; flex: none; margin-bottom: 4px; }
.ri svg.wide { width: 30px; }
.ri.on { background: #c8d6d4; box-shadow: inset 0 0 0 1px #a9c4be; }
.ri.first { margin-left: 1px; }
.cbox { flex: none; width: 13px; display: flex; justify-content: center; align-items: center; }
.cbox.low1 { width: 14px; align-items: flex-end; padding-bottom: 7px; }
.cbox.low1.c13 { width: 13px; }
.cbox.low2 { align-items: flex-end; padding-bottom: 8px; }
.grip { flex: none; width: 8px; margin: 2px 0 3px; border-left: 1px solid #e0e0e0; background: repeating-linear-gradient(#aaa 0 2px, transparent 2px 4px) 3px 0 / 3px 100% no-repeat; }
.grip.g2 { margin: 3px 0 3px; }

.tools { height: 70px; flex: none; display: flex; padding-left: 2px; border-bottom: 1px solid #e0e0e0; }
.ti { flex: none; width: 31px; display: flex; align-items: center; justify-content: center; }
.ti svg { width: 24px; height: 24px; display: block; flex: none; }
.sp { flex: none; display: flex; margin: 4px 0; background: linear-gradient(#dcdcdc, #dcdcdc) center / 1px 100% no-repeat; }
.s4 { width: 4px; } .s5 { width: 5px; } .s6 { width: 6px; } .s7 { width: 7px; }

.view { display: block; width: 898px; height: 687px; flex: none; }
.ax { font: 13px "Liberation Sans", sans-serif; }
.green { fill: #4b9c55; } .red { fill: #d8484c; } .blue { fill: #2a62ea; }

.bottom { height: 72px; flex: none; border-top: 1px solid #f0a860; border-bottom: 2px solid #bdbdbd; display: flex; padding-left: 5px; }
.ri.b1 { margin: 0; height: 68px; width: 71px; padding-top: 4px; line-height: 17px; }
.ri.b1 svg { margin-bottom: 4px; }
.bcar { width: 26px; border-right: 1px solid #e0e0e0; display: flex; flex-direction: column; padding: 32px 0 0 2px; gap: 20px; align-items: flex-start; }
.bcar .tri:last-child { margin-left: 11px; }
.status { flex: none; height: 9px; padding-left: 299px; font-size: 11px; font-weight: 700; line-height: 15px; letter-spacing: .3px; white-space: nowrap; }

/* watermark */
.mark { position: absolute; left: 920px; top: 920px; display: flex; }
.mark-logo { width: 86px; height: 100px; display: block; }
.mark-text { margin-left: 7px; padding-top: 14px; }
.mark-big { font: 700 47px/50px "Noto Sans CJK SC", sans-serif; color: #7cc8f0; white-space: nowrap; text-shadow: 0 0 3px #fff; }
.mark-small { font: 700 15px/16px "Liberation Mono", monospace; letter-spacing: 6.200px; color: #86cdf0; white-space: nowrap; margin-top: 2px; text-shadow: 0 0 2px #fff; }
```
